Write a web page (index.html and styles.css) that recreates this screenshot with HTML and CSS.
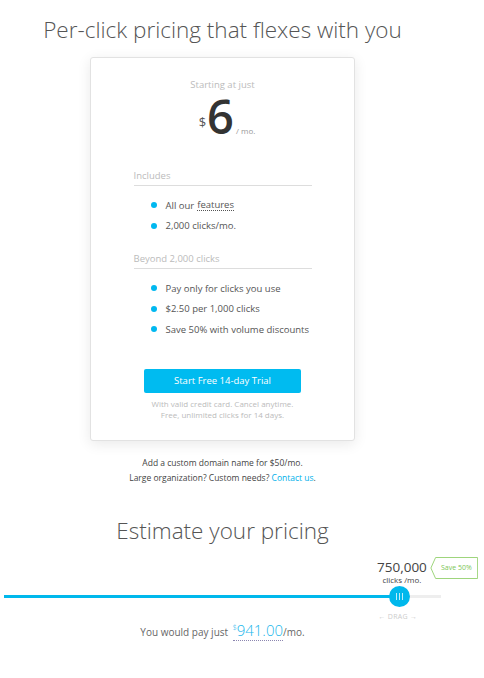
FILE: index.html
```html
<!DOCTYPE html>
<html>
  <head>
    <title>Pricing</title>
    <link rel="stylesheet" href="styles.css">
  </head>
  <body>
    <div class="page">
      <h1 class="title">Per-click pricing that flexes with you</h1>

      <div class="card">
        <div class="starting">Starting at just</div>
        <div class="price">
          <span class="currency">$</span><span class="amount">6</span><span class="per">/ mo.</span>
        </div>

        <div class="section">
          <div class="section-label">Includes</div>
          <ul class="features">
            <li>All our <span class="dotted">features</span></li>
            <li>2,000 clicks/mo.</li>
          </ul>
        </div>

        <div class="section section-beyond">
          <div class="section-label">Beyond 2,000 clicks</div>
          <ul class="features">
            <li>Pay only for clicks you use</li>
            <li>$2.50 per 1,000 clicks</li>
            <li>Save 50% with volume discounts</li>
          </ul>
        </div>

        <button class="trial">Start Free 14-day Trial</button>
        <p class="fineprint">With valid credit card. Cancel anytime.<br>Free, unlimited clicks for 14 days.</p>
      </div>

      <p class="extras">Add a custom domain name for $50/mo.<br>Large organization? Custom needs? <a href="#">Contact us</a>.</p>

      <h2 class="estimate">Estimate your pricing</h2>

      <div class="slider">
        <div class="fill" style="width: 90.6%"></div>
        <div class="thumb" style="left: 90.6%">
          <span class="grip"></span><span class="grip"></span><span class="grip"></span>
          <div class="readout">
            <div class="clicks">750,000</div>
            <div class="clicks-unit">clicks /mo.</div>
            <div class="save-tag">
              <svg width="48" height="22" viewBox="0 0 48 22">
                <path d="M5.5 0.5 H47.5 V21.5 H5.5 L0.8 11 Z" fill="#fff" stroke="#9ed57c" stroke-width="1"/>
              </svg>
              <span>Save 50%</span>
            </div>
          </div>
          <div class="drag">&larr; DRAG &rarr;</div>
        </div>
      </div>

      <p class="result">You would pay just <span class="total"><sup>$</sup>941.00</span>/mo.</p>
    </div>
  </body>
</html>
```

FILE: styles.css
```css
body {
  margin: 0;
  font-family: "Open Sans", Arial, sans-serif;
  color: #555;
  background: #fff;
}
.page {
  width: 445px;
}
.title {
  margin: 14px 0 11px;
  font-size: 22.5px;
  line-height: 32px;
  font-weight: 300;
  text-align: center;
  color: #555;
}
.card {
  box-sizing: border-box;
  width: 265px;
  height: 384px;
  margin: 0 auto;
  padding-top: 20px;
  border: 1px solid #e2e2e2;
  border-radius: 3px;
  background: #fff;
  box-shadow: 0 3px 14px rgba(0, 0, 0, 0.09);
  text-align: center;
}
.starting {
  font-size: 9.5px;
  line-height: 14px;
  color: #bbb;
}
.price {
  height: 46px;
  margin-top: 1px;
  padding-left: 9px;
  line-height: 46px;
  color: #333;
}
.currency {
  font-size: 13px;
  color: #555;
  margin-right: 1px;
  vertical-align: 7px;
}
.amount {
  font-size: 47px;
  font-weight: 600;
}
.per {
  font-size: 8px;
  color: #999;
  margin-left: 2px;
}
.section {
  width: 178px;
  margin: 30px auto 0;
  text-align: left;
}
.section-beyond {
  margin-top: 16px;
}
.section-label {
  font-size: 9.5px;
  line-height: 14px;
  padding-bottom: 2px;
  border-bottom: 1px solid #ddd;
  color: #bbb;
}
.features {
  list-style: none;
  margin: 9px 0 0;
  padding: 0 0 0 17px;
}
.features li {
  display: flex;
  align-items: center;
  height: 20.5px;
  font-size: 9.5px;
  color: #555;
}
.features li::before {
  content: "";
  width: 6px;
  height: 6px;
  margin-right: 9px;
  border-radius: 50%;
  background: #00b8f0;
}
.dotted {
  margin-left: 3px;
  border-bottom: 1px dotted #555;
  line-height: 11px;
}
.trial {
  display: block;
  width: 157px;
  height: 24px;
  margin: 29px auto 0;
  border: none;
  border-radius: 2px;
  background: #00bbf0;
  color: #fff;
  font-family: "Open Sans", Arial, sans-serif;
  font-size: 9.5px;
}
.fineprint {
  margin: 5px 0 0;
  font-size: 8px;
  line-height: 11px;
  color: #bbb;
}
.extras {
  margin: 14px 0 0;
  font-size: 8.5px;
  line-height: 15px;
  text-align: center;
  color: #444;
}
.extras a {
  color: #00b0ea;
  text-decoration: none;
}
.estimate {
  margin: 31px 0 0;
  font-size: 22.5px;
  line-height: 30px;
  font-weight: 300;
  text-align: center;
  color: #555;
}
.slider {
  position: relative;
  height: 3px;
  margin: 49px 4px 0;
  background: #eee;
}
.fill {
  height: 3px;
  background: #00b8ec;
}
.thumb {
  position: absolute;
  top: -9px;
  width: 21px;
  height: 21px;
  margin-left: -11px;
  border-radius: 50%;
  background: #00b8ec;
  display: flex;
  justify-content: center;
  align-items: center;
  gap: 2px;
}
.grip {
  width: 1px;
  height: 7px;
  background: rgba(255, 255, 255, 0.75);
}
.readout {
  position: absolute;
  bottom: 22px;
  left: 13px;
  transform: translateX(-50%);
  text-align: center;
  white-space: nowrap;
}
.clicks {
  font-size: 13.5px;
  line-height: 16px;
  color: #444;
}
.clicks-unit {
  font-size: 8px;
  line-height: 10px;
  color: #444;
}
.save-tag {
  position: absolute;
  top: -2px;
  left: calc(100% + 3px);
  width: 48px;
  height: 22px;
}
.save-tag svg {
  position: absolute;
  top: 0;
  left: 0;
}
.save-tag span {
  position: absolute;
  top: 0;
  left: 5px;
  right: 0;
  line-height: 22px;
  font-size: 7px;
  color: #7cc655;
  text-align: center;
}
.drag {
  position: absolute;
  top: 26px;
  left: 9px;
  transform: translateX(-50%);
  white-space: nowrap;
  font-size: 7px;
  letter-spacing: 0.3px;
  color: #ccc;
}
.result {
  margin: 20px 0 0;
  font-size: 10px;
  line-height: 20px;
  text-align: center;
  color: #666;
}
.total {
  font-size: 15px;
  font-weight: 300;
  color: #1ab7ec;
  border-bottom: 1px dotted #8c86b0;
  margin-left: 2px;
}
.total sup {
  font-size: 7px;
  vertical-align: 6px;
}
```
